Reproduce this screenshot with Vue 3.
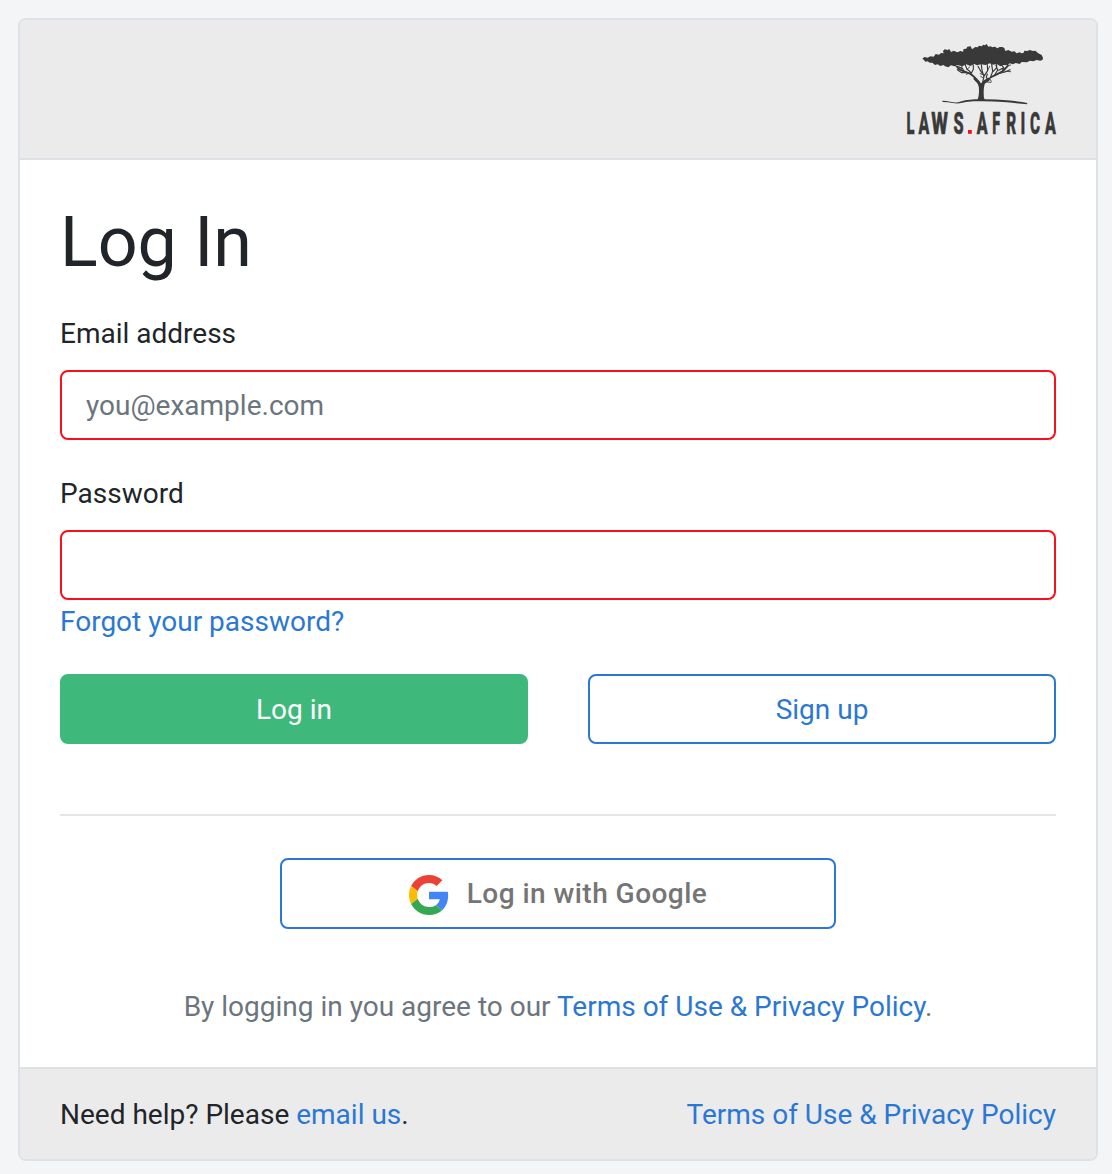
<script setup>
const letters = [
  { ch: 'L', x: 15.6, sx: 0.46 },
  { ch: 'A', x: 28.8, sx: 0.5 },
  { ch: 'W', x: 44.6, sx: 0.6 },
  { ch: 'S', x: 63.6, sx: 0.51 },
  { ch: 'A', x: 87.2, sx: 0.5 },
  { ch: 'F', x: 101.3, sx: 0.45 },
  { ch: 'R', x: 116.2, sx: 0.48 },
  { ch: 'I', x: 127.8, sx: 0.5 },
  { ch: 'C', x: 140.1, sx: 0.48 },
  { ch: 'A', x: 155.5, sx: 0.5 },
]
</script>

<template>
  <main class="page">
    <section class="card">
      <header class="card-header">
        <svg class="logo" width="158" height="108" viewBox="8 5 158 108" aria-label="Laws.Africa">
          <g transform="scale(.33333)">
            <g fill="#393939">
              <path d="M82 71 L88 66 98 68 106 64 116 65 122 57 132 59 138 54 146 55 144 48 149 43 158 45 163 42 168 51 176 47 187 52 196 48 204 50 206 42 214 41 217 35 227 34 231 43 241 36 248 37 252 32 261 34 264 29 270 31 275 27 280 35 287 34 292 37 300 35 307 40 314 36 322 36 328 39 331 48 340 45 350 50 359 49 364 55 374 52 380 55 386 53 388 47 397 48 404 45 414 48 421 47 430 55 440 60 444 68 443 74 436 77 425 75 415 79 405 77 396 82 380 81 374 87 362 84 354 88 344 85 338 91 326 90 316 94 306 87 294 89 284 85 272 90 258 88 246 91 238 87 226 93 214 88 202 94 186 90 178 94 168 91 160 97 150 94 146 90 136 93 128 88 120 90 112 83 104 83 98 79 91 80 87 75Z" />
              <path d="M245 197 Q252 188 252 168 Q253 157 249 146 L269 146 Q266 158 266 171 Q265 187 270 197Z" />
              <path d="M142 197 Q156 197 166 200 Q177 203 190 202 Q207 195 240 193 Q290 191 336 196 Q373 199 397 204 L396 208 Q365 205 335 202 Q280 197 235 199 Q212 201 194 205 Q175 206 159 202 L143 201Z" />
            </g>
            <g fill="none" stroke="#393939" stroke-linecap="round" stroke-linejoin="round">
              <path stroke-width="9" d="M257 152 Q253 143 240 131 M261 151 Q263 143 280 133" />
              <path stroke-width="5.5" d="M242 132 Q234 119 217 113 Q202 108 190 101 M279 134 Q290 124 304 119 L324 108 339 92" />
              <path stroke-width="3.5" d="M262 145 L267 125 261 106 259 89 M266 125 L278 107 277 89 M230 121 Q228 110 216 103 L210 88 M217 113 L200 113 187 104 M207 109 L202 100 186 94 M190 101 L181 91 M228 117 L235 103 235 90 M278 134 L274 126 277 117 M287 126 L293 109 290 88 M299 120 L308 105 303 91 M307 117 L330 111 345 104 M322 108 L326 98 318 88 M311 106 L326 98 M269 121 L259 112 249 94 M294 110 L305 98 305 88" />
              <path stroke-width="2.7" d="M257 124 L265 129 M256 116 L264 119 M267 140 L288 142 M285 133 L289 139 M216 103 L224 96 M200 100 L201 91 M329 109 L347 110 M339 92 L347 90 M223 113 L214 118 M278 106 L284 94" />
            </g>
          </g>
          <g class="wordmark">
            <text
              v-for="(item, index) in letters"
              :key="index"
              :transform="`translate(${item.x} 98.6) scale(${item.sx} 1)`"
            >{{ item.ch }}</text>
          </g>
          <rect x="73" y="95" width="3.8" height="3.8" fill="#ff0b12" />
        </svg>
      </header>

      <div class="card-body">
        <h1>Log In</h1>
        <form>
          <div class="field">
            <label for="email">Email address</label>
            <input id="email" type="email" placeholder="you@example.com" />
          </div>
          <div class="field">
            <label for="password">Password</label>
            <input id="password" type="password" />
          </div>
          <a class="forgot">Forgot your password?</a>
          <div class="actions">
            <button type="button" class="btn btn-success">Log in</button>
            <button type="button" class="btn btn-outline">Sign up</button>
          </div>
        </form>
        <hr />
        <button type="button" class="btn btn-outline google">
          <svg width="40" height="40" viewBox="0 0 48 48" aria-hidden="true">
            <path fill="#EA4335" d="M24 9.5c3.54 0 6.71 1.22 9.21 3.6l6.85-6.85C35.9 2.38 30.47 0 24 0 14.62 0 6.51 5.38 2.56 13.22l7.98 6.19C12.43 13.72 17.74 9.5 24 9.5z" />
            <path fill="#4285F4" d="M46.98 24.55c0-1.57-.15-3.09-.38-4.55H24v9.02h12.94c-.58 2.96-2.26 5.48-4.78 7.18l7.73 6c4.51-4.18 7.09-10.36 7.09-17.65z" />
            <path fill="#FBBC05" d="M10.53 28.59c-.48-1.45-.76-2.99-.76-4.59s.27-3.14.76-4.59l-7.98-6.19C.92 16.46 0 20.12 0 24s.92 7.54 2.56 10.78l7.97-6.19z" />
            <path fill="#34A853" d="M24 48c6.48 0 11.93-2.13 15.89-5.81l-7.73-6c-2.15 1.45-4.92 2.3-8.16 2.3-6.26 0-11.57-4.22-13.47-9.91l-7.98 6.19C6.51 42.62 14.62 48 24 48z" />
          </svg>
          <span>Log in with Google</span>
        </button>
        <p class="agreement">By logging in you agree to our <a>Terms of Use &amp; Privacy Policy</a>.</p>
      </div>

      <footer class="card-footer">
        <span>Need help? Please <a>email us</a>.</span>
        <a>Terms of Use &amp; Privacy Policy</a>
      </footer>
    </section>
  </main>
</template>

<style>
body {
  background: #f4f5f7;
}
</style>

<style scoped>
.page {
  box-sizing: border-box;
  height: 1174px;
  padding: 18px 14px 13px 18px;
  font-family: Roboto, sans-serif;
  font-size: 28px;
  line-height: 42px;
  color: #212529;
}
.card {
  box-sizing: border-box;
  height: 1143px;
  display: flex;
  flex-direction: column;
  border: 2px solid #dee2e6;
  border-radius: 8px;
  background: #fff;
  overflow: hidden;
}
.card-header {
  box-sizing: border-box;
  height: 140px;
  padding: 20px 35px 0 40px;
  display: flex;
  justify-content: flex-end;
  background: #ebebeb;
  border-bottom: 2px solid #dee2e6;
}
.logo {
  display: block;
}
.wordmark text {
  font: 800 32px Roboto, sans-serif;
  text-anchor: middle;
  fill: #393939;
  stroke: #393939;
  stroke-width: 0.6px;
}
.card-body {
  flex: 1;
  padding: 40px 40px 0;
}
h1 {
  margin: 0 0 29px;
  font-size: 70px;
  font-weight: 400;
  line-height: 84px;
}
.field + .field {
  margin-top: 33px;
}
label {
  display: block;
  margin-bottom: 15px;
}
input {
  display: block;
  box-sizing: border-box;
  width: 100%;
  height: 70px;
  padding: 12px 24px;
  border: 2px solid #f8101c;
  border-radius: 8px;
  background: #fff;
  font: inherit;
  outline: none;
}
input::placeholder {
  color: #6c757d;
  opacity: 1;
}
a {
  color: #2a78d4;
  text-decoration: none;
}
.forgot {
  display: block;
  margin-top: 1px;
}
.actions {
  display: flex;
  gap: 60px;
  margin-top: 31px;
}
.btn {
  box-sizing: border-box;
  height: 70px;
  padding: 0;
  border: 2px solid;
  border-radius: 8px;
  font: inherit;
}
.actions .btn {
  flex: 1;
  padding-top: 2px;
}
.btn-success {
  color: #fff;
  background: #3eb97b;
  border-color: #3eb97b;
}
.btn-outline {
  color: #2a78d4;
  background: #fff;
  border-color: #2a78d4;
}
hr {
  margin: 70px 0 42px;
  border: 0;
  border-top: 2px solid #e5e5e5;
}
.google {
  display: flex;
  align-items: center;
  justify-content: center;
  gap: 18px;
  width: 556px;
  height: 71px;
  margin: 0 auto;
  font-weight: 500;
}
.google svg {
  position: relative;
  top: 1px;
}
.google span {
  color: #757575;
  letter-spacing: 0.47px;
}
.agreement {
  margin: 57px 0 0;
  text-align: center;
  color: #6c757d;
}
.card-footer {
  box-sizing: border-box;
  height: 92px;
  padding: 25px 40px 0;
  display: flex;
  justify-content: space-between;
  background: #ebebeb;
  border-top: 2px solid #dee2e6;
}
</style>
